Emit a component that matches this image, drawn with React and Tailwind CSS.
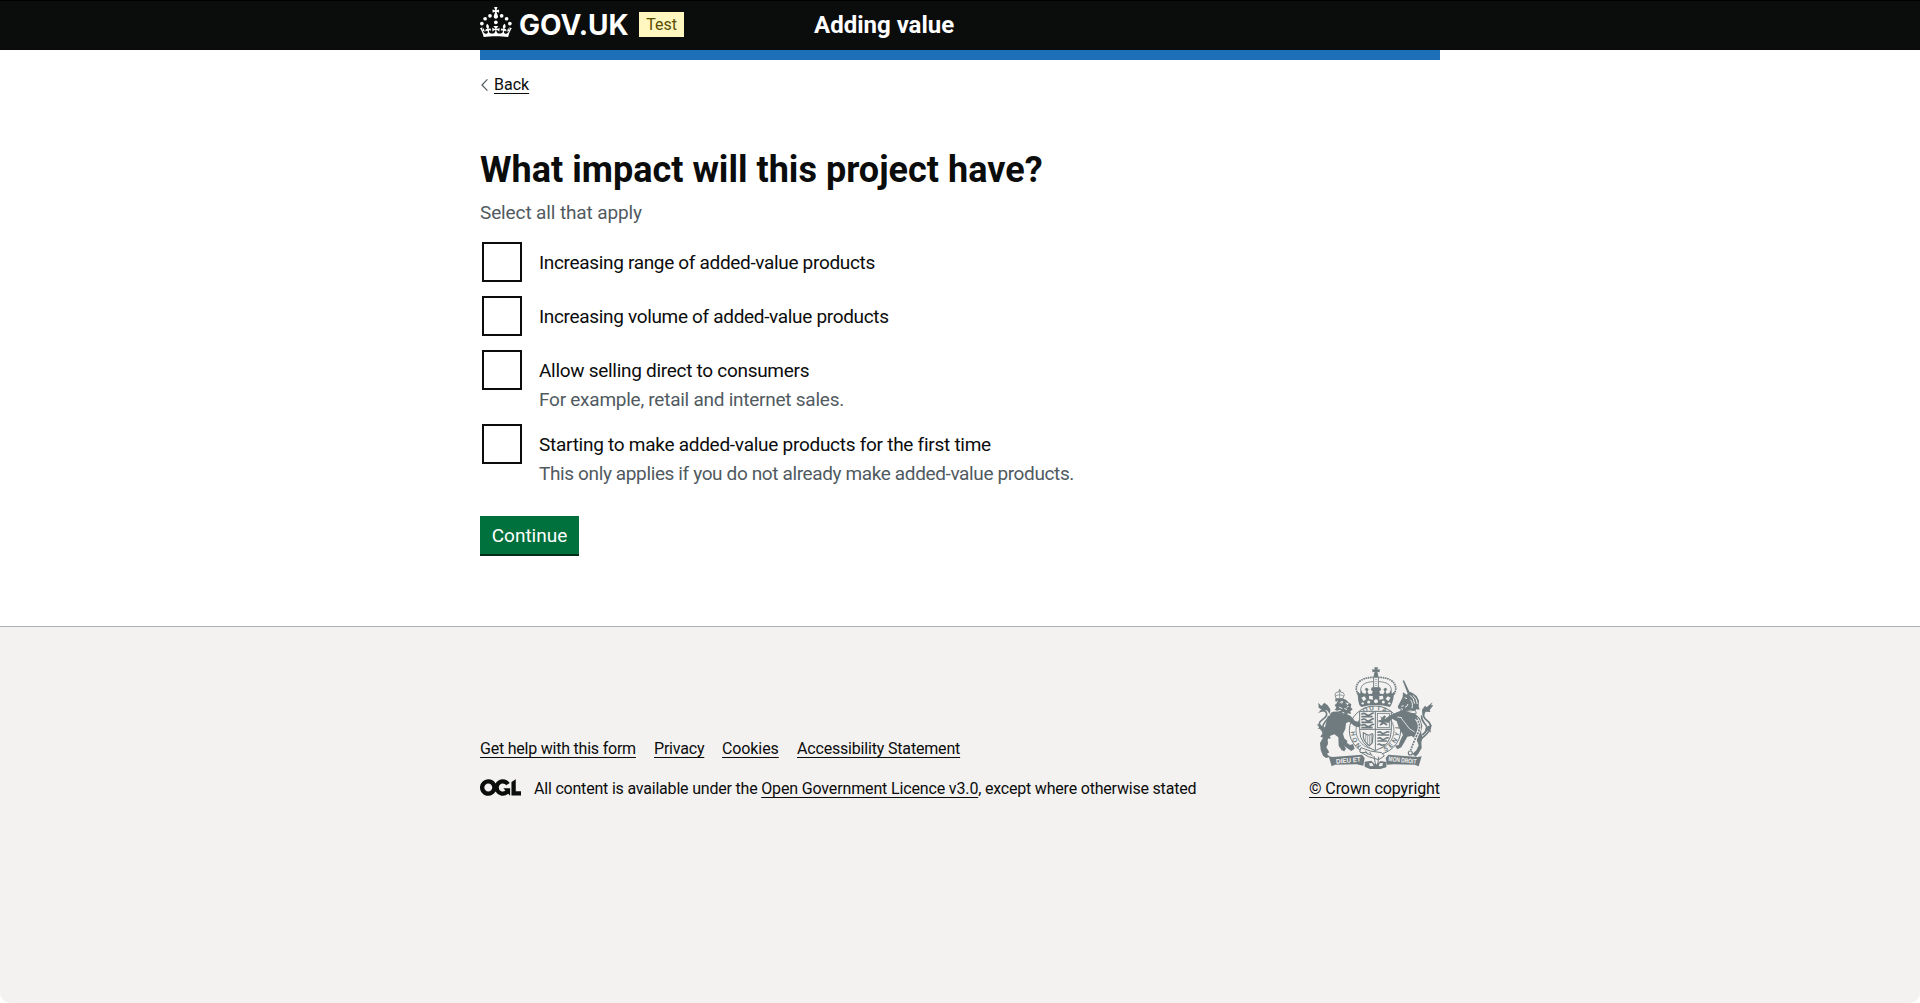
import React from "react";

const linkClass =
  "underline decoration-[1px] underline-offset-[3px] whitespace-nowrap";

function Crown() {
  return (
    <svg viewBox="0 0 64 60" className="h-[30px] w-8 shrink-0 fill-white" aria-hidden="true">
      <circle cx="20" cy="17.6" r="3.7" />
      <circle cx="10.2" cy="23.5" r="3.7" />
      <circle cx="3.7" cy="33.2" r="3.7" />
      <circle cx="31.7" cy="30.6" r="3.7" />
      <circle cx="43.3" cy="17.6" r="3.7" />
      <circle cx="53.2" cy="23.5" r="3.7" />
      <circle cx="59.7" cy="33.2" r="3.7" />
      <path d="M33.1,9.8c.2-.1.3-.3.5-.5l4.6,2.4v-6.8l-4.6,1.5c-.1-.2-.3-.3-.5-.5l1.9-5.9h-6.7l1.9,5.9c-.2.1-.3.3-.5.5l-4.6-1.5v6.8l4.6-2.4c.1.2.3.3.5.5l-2.6,8c-.9,2.8,1.2,5.7,4.1,5.7h0c3,0,5.1-2.9,4.1-5.7l-2.6-8ZM37,37.9s-3.4,3.8-4.1,6.1c2.2,0,4.2-.5,6.4-2.8l-.7,8.5c-2-2.8-4.4-4.1-5.7-3.8.1,3.1.5,6.7,5.8,7.2,3.7.3,6.7-1.5,7-3.8.4-2.6-2-4.3-3.7-1.6-1.4-4.5,2.4-6.1,4.9-3.2-1.9-4.5-1.8-7.7,2.4-10.9,3,4,2.6,7.3-1.2,11.1,2.4-1.3,6.2,0,4,4.6-1.2-2.8-3.7-2.2-4.2.2-.3,1.7.7,3.7,3,4.2,1.9.3,4.7-.9,7-5.9-1.3,0-2.4.7-3.9,1.7l2.4-8c.6,2.3,1.4,3.7,2.2,4.5.6-1.6.5-2.8,0-5.3l5,1.8c-2.6,3.6-5.2,8.7-7.3,17.5-7.4-1.1-15.7-1.7-24.5-1.7h0c-8.8,0-17.1.6-24.5,1.7-2.1-8.9-4.7-13.9-7.3-17.5l5-1.8c-.5,2.5-.6,3.7,0,5.3.8-.8,1.6-2.3,2.2-4.5l2.4,8c-1.5-1-2.6-1.7-3.9-1.7,2.3,5,5.2,6.2,7,5.9,2.3-.4,3.3-2.4,3-4.2-.5-2.4-3-3.1-4.2-.2-2.2-4.6,1.6-6,4-4.6-3.7-3.7-4.2-7.1-1.2-11.1,4.2,3.2,4.3,6.4,2.4,10.9,2.5-2.8,6.3-1.3,4.9,3.2-1.8-2.7-4.1-1-3.7,1.6.3,2.3,3.3,4.1,7,3.8,5.4-.5,5.7-4.2,5.8-7.2-1.3-.2-3.7,1-5.7,3.8l-.7-8.5c2.2,2.3,4.2,2.7,6.4,2.8-.7-2.3-4.1-6.1-4.1-6.1h10.6,0Z" />
    </svg>
  );
}

function OglLogo() {
  return (
    <svg viewBox="0 0 483.2 195.7" className="h-[17px] w-[41px] shrink-0 fill-[#0b0c0c]" aria-hidden="true">
      <path d="M421.5 142.8V.1l-50.7 32.3v161.1h112.4v-50.7zm-122.3-9.6A47.12 47.12 0 0 1 221 97.8c0-26 21.1-47.1 47.1-47.1 16.7 0 31.4 8.7 39.7 21.8l42.7-27.2A97.63 97.63 0 0 0 268.1 0c-36.5 0-68.3 20.1-85.1 49.7A98 98 0 0 0 97.8 0C43.9 0 0 43.9 0 97.8s43.9 97.8 97.8 97.8c36.5 0 68.3-20.1 85.1-49.7a97.76 97.76 0 0 0 149.6 25.4l19.4 22.2h3v-87.8h-80l24.3 27.5zM97.8 145c-26 0-47.1-21.1-47.1-47.1s21.1-47.1 47.1-47.1 47.1 21.1 47.1 47.1S123.8 145 97.8 145" />
    </svg>
  );
}

function CoatOfArms() {
  return (
    <svg viewBox="27 36 393 306" className="h-[102px] w-[131px]" fill="#6f7b7e" stroke="none" aria-hidden="true">
      {/* crown */}
      <path d="M223 37h11l-2 7 7-2v10l-7-2 2 8h-12l2-8-7 2v-10l7 2z" />
      <circle cx="228" cy="62" r="7" />
      <g fill="none" stroke="#6f7b7e">
        <path d="M174 118C158 90 180 66 222 67M282 118C298 90 276 66 234 67" strokeWidth="5" strokeDasharray="5 2" />
        <path d="M183 112C178 94 192 80 220 80M273 112C278 94 264 80 236 80" strokeWidth="2.5" />
        <path d="M221 68V106M235 68V106" strokeWidth="3" />
        <path d="M228 72V106" strokeWidth="3" strokeDasharray="3 3" />
      </g>
      <path d="M172 108l8 8 4-11 3 8 9 4 3-8-5-7 6-4 6 5-4 7 4 7 10-1 2-8-6-3 4-8h24l4 8-6 3 2 8 10 1 4-7-4-7 6-5 6 4-5 7 3 8 9-4 3-8 4 11 8-8-5 28q-3 12-9 20-43-12-86 0-8-6-9-18z" />
      <g fill="#f3f2f1">
        <path d="M184 128l9-4 6 8-8 7zM207 122l11 1 1 11-12-2zM238 123l11-1 1 10-12 2zM263 124l9 4-7 11-8-7z" />
        <circle cx="228" cy="139" r="6" />
        <circle cx="206" cy="141" r="4.5" />
        <circle cx="250" cy="141" r="4.5" />
        <circle cx="188" cy="145" r="3.5" />
        <circle cx="268" cy="145" r="3.5" />
      </g>

      {/* garter */}
      <g fill="none" stroke="#6f7b7e">
        <ellipse cx="225" cy="226" rx="77" ry="73" strokeWidth="3" />
        <ellipse cx="225" cy="226" rx="57" ry="56" strokeWidth="2.5" />
      </g>
      <g fontFamily="Liberation Sans, sans-serif" fontSize="19" fontWeight="700" textAnchor="middle">
        <text transform="translate(198 170) rotate(-23)">Q</text>
        <text transform="translate(215 166) rotate(-8)">U</text>
        <text transform="translate(235 166) rotate(7)">I</text>
        <text transform="translate(252 170) rotate(20)">A</text>
        <text transform="translate(166 235) rotate(-98)">H</text>
        <text transform="translate(170 252) rotate(-115)">O</text>
        <text transform="translate(179 267) rotate(-132)">N</text>
        <text transform="translate(299 216) rotate(-85)">L</text>
        <text transform="translate(297 240) rotate(-72)">Y</text>
        <text transform="translate(289 260) rotate(-55)">N</text>
        <text transform="translate(276 276) rotate(-40)">E</text>
        <text transform="translate(260 288) rotate(-24)">S</text>
      </g>

      {/* shield */}
      <path d="M179 169H274V226Q274 270 226 287Q179 270 179 226z" fill="#f3f2f1" stroke="#6f7b7e" strokeWidth="3" />
      <path d="M226 169V286M180 223H273" fill="none" stroke="#6f7b7e" strokeWidth="3" />
      <g fill="none" stroke="#6f7b7e" strokeWidth="5">
        <path d="M184 178q8-6 14 0t14 0 9-2M184 185h34" />
        <path d="M184 195q8-6 14 0t14 0 9-2M184 202h34" />
        <path d="M184 212q8-6 14 0t14 0 9-2M184 218h34" />
        <path d="M232 233q8-5 12 0t12 0 12-1M232 240h36M232 251q8-5 12 0t12 0 10-1M232 258h30M232 269q6-4 10 0t12-1" />
      </g>
      <rect x="232" y="175" width="36" height="43" fill="none" stroke="#6f7b7e" strokeWidth="2.5" />
      <path d="M240 183l6 5 7-7 5 4-4 7 8 1-1 7-7-2 3 6 6 4-4 4-8-6-5 4-7 2 1-5 5-4-6-3-3 3-1-7 8-1 1-4z" />
      <path d="M190 233l7 4q10 8 19-1l3 4-2 23-9 9q-14-9-18-24z" fill="none" stroke="#6f7b7e" strokeWidth="3.5" />
      <path d="M197 240v17M203 243v21M209 242v26M214 240v22" fill="none" stroke="#6f7b7e" strokeWidth="2" />

      {/* lion */}
      <path d="M105 118l3 13 20 1 5-13q-3-9-11-8l-3-8-3 8q-9-1-11 7z" fill="#f3f2f1" stroke="#6f7b7e" strokeWidth="2.5" />
      <path d="M119 104v26M108 122q11-6 22 0" fill="none" stroke="#6f7b7e" strokeWidth="2" />
      <path d="M105 132l21-2 12 4 7 8 9 6-2 9 6 6-7 6 2 8-10-2-4 7-9-5-6 6-3-8-11 2 3-9-9-4 5-6-5-8 5-4z" />
      <path d="M108 168q14 13 31 8l13 7 13 15 13 3 5 9-6 7-13-3-17-14-9 5-2 17-7 14 4 14 9 8-2 8-8 5 6 10-5 8-8-3-9-14-1-25-12-9-12 4-8 12 1 13-5 10 9 15-7 5 9 9-12 3-9-7-7-17-2-21 9-16-8-3 11-18 8-30 13-24q9-5 16-3z" />
      <path d="M112 137l-3 8M119 143l9-4-3 7M137 144l8 2-5 4M117 156l10 5M133 160l8 4M113 168l9-2M127 172l6 2M146 154l-6 3" fill="none" stroke="#f3f2f1" strokeWidth="3" />
      <path d="M122 250l28 20 9-3 5 14-10 7-14-10-18-14z" />
      <path d="M91 250Q55 222 58 205C61 193 82 190 80 176C79 166 68 166 60 169M91 238Q66 226 69 212C71 202 85 193 86 183" fill="none" stroke="#6f7b7e" strokeWidth="5" />
      <path d="M53 174l12-10-9-6-1-15 9 10 9-10 10 8 8 12-1 15-9-12-12 1-6 4z" />
      <path d="M60 207l-10 2 8 6-5 8 11-3 3 16 6-14 9-4-13-2z" />

      {/* unicorn */}
      <path d="M308 77l4-1 17 36-6 4z" />
      <path d="M309 112l11 7 9-9 9 4 12 9 7 14-1 17 3 10-10-1-7 7-9-6-8 3-14 2-4-9-10 3-4-8 9-17 6-12z" />
      <path d="M314 128l7 3M330 121q13 9 14 25M339 121q12 10 13 26M304 154l7-2M331 134q9 9 5 26M324 147q-2 8-9 10" fill="none" stroke="#f3f2f1" strokeWidth="3" />
      <path d="M302 163l14 6 30-3 3 9-35 2-12-4z" fill="#f3f2f1" stroke="#6f7b7e" strokeWidth="2.5" />
      <path d="M287 173l20-8 39 12 14 13 7 22-4 19 5 17-4 14 1 17-9 16-9 10-10-8 12-11 7-15-6-16-15-12-13 2-9 17-9 15-12 6-7-11 11-2 5-14 8-17-11-18-8-22-14-8-11 13-10-2 2-12 14-9z" />
      <path d="M302 187l26 34 16 10M292 186l13 2" fill="none" stroke="#f3f2f1" strokeWidth="2.5" />
      <path d="M349 190q17 20 4 46T332 286" fill="none" stroke="#f3f2f1" strokeWidth="10" />
      <path d="M349 190q17 20 4 46T332 286" fill="none" stroke="#6f7b7e" strokeWidth="5" strokeDasharray="6 3" />
      <circle cx="331" cy="294" r="6" fill="none" stroke="#6f7b7e" strokeWidth="3.5" />
      <path d="M365 250Q401 222 388 203C379 193 365 187 373 172M367 240Q386 224 378 211C370 200 363 196 365 181" fill="none" stroke="#6f7b7e" strokeWidth="5" />
      <path d="M367 181l-1-17 9-12 5 5 18-16-5 10 7 0-11 14 2 6-13-1z" />
      <path d="M384 213l13-3-7 9 3 14-9-7-9 8 1-13z" />

      {/* belt and scrolls */}
      <path d="M183 278l28 10 34 5 8 10-17 11-31-9-26-15z" fill="#f3f2f1" stroke="#6f7b7e" strokeWidth="3" />
      <path d="M196 287l8 12M209 291l8 13M180 292q20-2 32 8M222 303l5 28M236 305l-3 26" fill="none" stroke="#6f7b7e" strokeWidth="3" />
      <path d="M194 320l20-3 13 13 15-12 18 3-1 16-18 5h-31l-16-7z" />
      <path d="M207 325l9-1 5 8-11 2zM239 325l10-1-2 9-11 1z" fill="#f3f2f1" />
      <path d="M86 304l12 2 88-7 8 10-4 23-20-4-65 1-10 5z" />
      <path d="M365 304l-12 2-88-7-8 10 4 20 20-1 63 1 12 5z" />
      <g fill="#f3f2f1" fontFamily="Liberation Sans, sans-serif" fontSize="20" fontWeight="700">
        <text transform="translate(109 326) rotate(-5)" textLength="74" lengthAdjust="spacingAndGlyphs">DIEU ET</text>
        <text transform="translate(265 318) rotate(6)" textLength="84" lengthAdjust="spacingAndGlyphs">MON DROIT</text>
      </g>
    </svg>
  );
}

const options = [
  { label: "Increasing range of added-value products", tracking: "tracking-[-0.33px]" },
  { label: "Increasing volume of added-value products", tracking: "tracking-[-0.33px]" },
  {
    label: "Allow selling direct to consumers",
    tracking: "tracking-[-0.29px]",
    hint: "For example, retail and internet sales.",
    hintTracking: "tracking-[-0.25px]",
  },
  {
    label: "Starting to make added-value products for the first time",
    tracking: "tracking-[-0.27px]",
    hint: "This only applies if you do not already make added-value products.",
    hintTracking: "tracking-[-0.375px]",
  },
];

const footerLinks = [
  { label: "Get help with this form", size: "w-[156px] tracking-[-0.22px]" },
  { label: "Privacy", size: "w-[50px] tracking-[-0.2px]" },
  { label: "Cookies", size: "w-[57px] tracking-[-0.1px]" },
  { label: "Accessibility Statement", size: "w-[163px] tracking-[-0.18px]" },
];

export default function App() {
  return (
    <div className="flex min-h-[1003px] flex-col bg-white font-['Roboto',sans-serif] text-[#0b0c0c]">
      <header className="h-[50px] border-t border-black bg-[#0b0c0c]">
        <div className="mx-auto flex w-[960px] items-start text-white">
          <div className="flex w-[334px] items-start pt-[6px]">
            <Crown />
            <span className="mt-px ml-[7px] w-[109px] font-['Inter',sans-serif] text-[28px] leading-[34px] font-bold">
              GOV.UK
            </span>
            <span className="mt-[5px] ml-[11px] flex h-[25px] w-[45px] items-center justify-center bg-[#fff7bf] text-base leading-5 text-[#594d00]">
              Test
            </span>
          </div>
          <span className="mt-[9px] text-2xl leading-[30px] font-bold">Adding value</span>
        </div>
      </header>

      <div className="mx-auto w-[960px]">
        <div className="h-[10px] bg-[#1d70b8]" />
        <a className="mt-[15px] flex h-5 items-center text-base leading-5">
          <svg viewBox="0 0 8 12" className="mr-[6px] h-3 w-2" fill="none" stroke="#505a5f" aria-hidden="true">
            <path d="M7.4 .4L2 6l5.4 5.6" strokeWidth="1.2" />
          </svg>
          <span className={linkClass}>Back</span>
        </a>

        <main className="h-[531px] pt-[55px]">
          <h1 className="text-4xl leading-10 font-bold tracking-[0.02px]">What impact will this project have?</h1>
          <p className="mt-[10px] text-[19px] leading-[25px] tracking-[-0.12px] text-[#505a5f]">
            Select all that apply
          </p>
          <div className="mt-[15px] flex flex-col gap-[10px]">
            {options.map((o) => (
              <label key={o.label} className="flex min-h-11 items-start">
                <span className="m-[2px] size-10 shrink-0 border-2 border-[#0b0c0c] bg-white" />
                <span className="ml-[15px] flex flex-col pt-[10px] text-[19px] leading-[25px] whitespace-nowrap">
                  <span className={o.tracking}>{o.label}</span>
                  {o.hint && (
                    <span className={`mt-1 text-[#505a5f] ${o.hintTracking}`}>{o.hint}</span>
                  )}
                </span>
              </label>
            ))}
          </div>
          <button className="mt-[30px] flex h-[38px] w-[99px] items-center justify-center bg-[#00703c] text-[19px] leading-[25px] text-white shadow-[0_2px_0_#002d18]">
            Continue
          </button>
        </main>
      </div>

      <footer className="flex-1 rounded-b-[10px] border-t border-[#b1b4b6] bg-[#f3f2f1]">
        <div className="mx-auto flex w-[960px] items-end justify-between pt-10 text-base leading-5">
          <div>
            <nav className="flex gap-[18px]">
              {footerLinks.map((l) => (
                <a key={l.label} className={`${linkClass} ${l.size}`}>
                  {l.label}
                </a>
              ))}
            </nav>
            <div className="mt-5 flex items-start">
              <OglLogo />
              <p className="ml-[13px] tracking-[-0.2px] whitespace-nowrap">
                All content is available under the{" "}
                <a className={`${linkClass} tracking-[-0.146px]`}>Open Government Licence v3.0</a>, except
                where otherwise stated
              </p>
            </div>
          </div>
          <div className="flex w-[131px] flex-col items-center gap-[10px]">
            <CoatOfArms />
            <a className={`${linkClass} tracking-[-0.09px]`}>© Crown copyright</a>
          </div>
        </div>
      </footer>
    </div>
  );
}
